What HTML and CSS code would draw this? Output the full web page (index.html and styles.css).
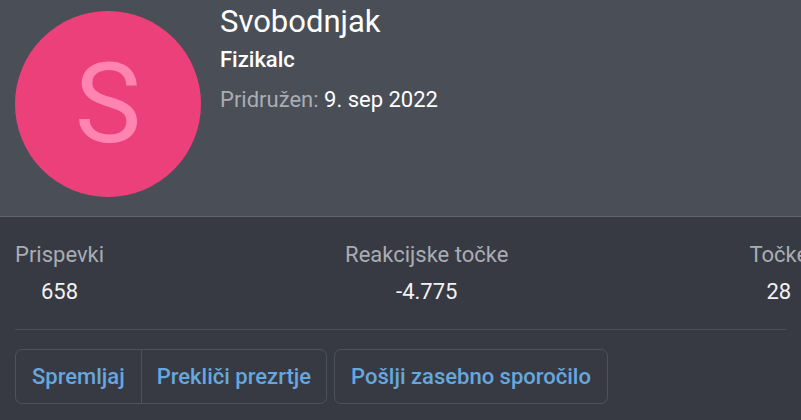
FILE: index.html
```html
<!DOCTYPE html>
<html lang="sl">
<head>
<meta charset="utf-8">
<link rel="stylesheet" href="styles.css">
</head>
<body>
<div class="card">
  <div class="header">
    <div class="avatar"><span>S</span></div>
    <div class="info">
      <div class="name">Svobodnjak</div>
      <div class="title">Fizikalc</div>
      <div class="joined"><span class="muted">Pridružen:</span> 9. sep 2022</div>
    </div>
  </div>
  <div class="body">
    <div class="stats">
      <dl class="stat"><dt>Prispevki</dt><dd>658</dd></dl>
      <dl class="stat"><dt>Reakcijske točke</dt><dd>-4.775</dd></dl>
      <dl class="stat"><dt>Točke</dt><dd>28</dd></dl>
    </div>
    <div class="actions">
      <div class="group">
        <a class="btn">Spremljaj</a>
        <a class="btn">Prekliči prezrtje</a>
      </div>
      <div class="group">
        <a class="btn">Pošlji zasebno sporočilo</a>
      </div>
    </div>
  </div>
</div>
</body>
</html>
```
FILE: styles.css
```css
html, body {
  margin: 0;
  padding: 0;
  background: #373a43;
  font-family: Roboto, "Liberation Sans", sans-serif;
  overflow: hidden;
}
.card {
  width: 801px;
  height: 420px;
  overflow: hidden;
}
.header {
  display: flex;
  gap: 19px;
  padding: 11px 15px 19px;
  background: #4a4e57;
  border-bottom: 1px solid #5d6169;
}
.avatar {
  width: 186px;
  height: 186px;
  border-radius: 50%;
  background: #ec407a;
  display: flex;
  align-items: center;
  justify-content: center;
  flex: none;
}
.avatar span {
  color: #ff85b0;
  font-size: 112px;
  line-height: 1;
}
.info {
  color: #fff;
}
.name {
  font-size: 31px;
  line-height: 36px;
  margin-top: -7px;
}
.title {
  font-size: 22px;
  font-weight: 500;
  line-height: 28px;
  margin-top: 6px;
}
.joined {
  font-size: 22px;
  line-height: 28px;
  margin-top: 12px;
}
.muted {
  color: #a9adb3;
}
.body {
  padding: 0 15px;
}
.stats {
  display: flex;
  gap: 241px;
  padding: 25px 0 24px;
  border-bottom: 1px solid #4c5059;
  white-space: nowrap;
}
.stat {
  margin: 0;
  text-align: center;
  font-size: 22px;
  line-height: 26px;
}
.stat dt {
  color: #a9adb3;
}
.stat dd {
  margin: 11px 0 0;
  color: #f2f2f2;
}
.actions {
  display: flex;
  gap: 7px;
  padding-top: 19px;
}
.group {
  display: flex;
  border: 1px solid #4e525a;
  border-radius: 7px;
}
.btn {
  display: block;
  padding: 0 16px;
  height: 53px;
  line-height: 53px;
  color: #67a7df;
  font-size: 22px;
  font-weight: 500;
}
.btn + .btn {
  border-left: 1px solid #4e525a;
  padding: 0 15px;
}
```
